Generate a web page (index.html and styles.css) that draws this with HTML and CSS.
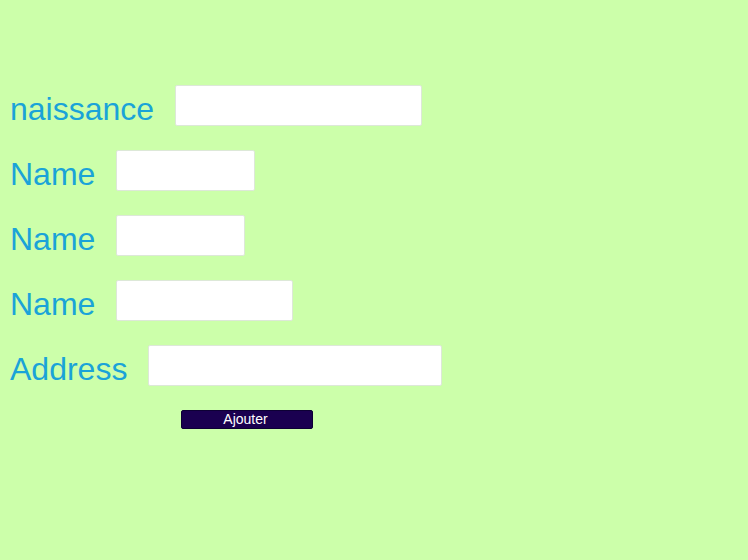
FILE: index.html
```html
<!DOCTYPE html>
<html>
<head>
<meta charset="utf-8">
<link rel="stylesheet" href="styles.css">
</head>
<body>
<form class="form">
  <div class="row"><label class="label">naissance</label><input class="field w246" type="text"></div>
  <div class="row"><label class="label">Name</label><input class="field w138" type="text"></div>
  <div class="row"><label class="label">Name</label><input class="field w128" type="text"></div>
  <div class="row"><label class="label">Name</label><input class="field w176" type="text"></div>
  <div class="row"><label class="label">Address</label><input class="field w293" type="text"></div>
  <div class="actions"><button class="btn" type="button">Ajouter</button></div>
</form>
</body>
</html>
```
FILE: styles.css
```css
html, body {
  margin: 0;
  height: 100%;
  background: #ccffaa;
}
body {
  font-family: "Liberation Sans", Arial, sans-serif;
}
.form {
  display: flex;
  flex-direction: column;
  gap: 24px;
  padding: 85px 0 0 10px;
}
.row {
  display: flex;
  align-items: center;
  gap: 21px;
  height: 41px;
}
.label {
  font-size: 32px;
  color: #1aa3d8;
  line-height: 1;
  padding-top: 6px;
}
.field {
  box-sizing: border-box;
  height: 41px;
  margin: 0;
  border: 1px solid #dde8d8;
  border-radius: 2px;
  background: #fff;
  padding: 0 6px;
}
.w246 { width: 247px; }
.w138 { width: 139px; }
.w128 { width: 129px; }
.w176 { width: 177px; }
.w293 { width: 294px; }
.actions {
  display: flex;
  padding-left: 171px;
}
.btn {
  box-sizing: border-box;
  width: 132px;
  height: 19px;
  margin: 0;
  padding: 0 3px 0 0;
  border: 1px solid #0d0035;
  border-radius: 2px;
  background: #1a0050;
  color: #fff;
  font-family: "Liberation Sans", Arial, sans-serif;
  font-size: 14px;
  line-height: 17px;
}
```
